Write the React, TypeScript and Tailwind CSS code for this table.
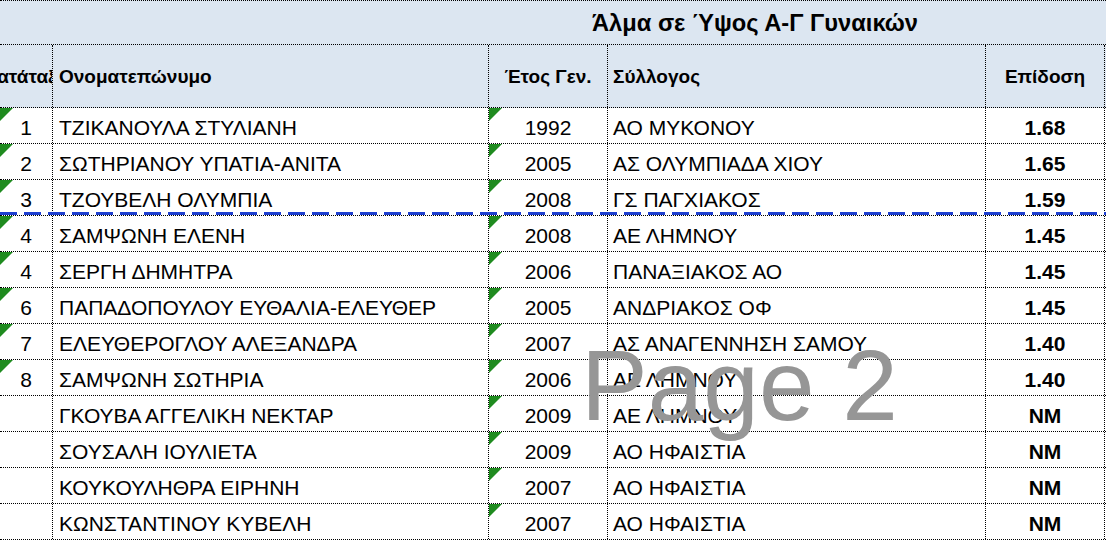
import React from "react";

type Row = { rank: string; name: string; year: string; club: string; mark: string };

const rows: Row[] = [
  { rank: "1", name: "ΤΖΙΚΑΝΟΥΛΑ ΣΤΥΛΙΑΝΗ", year: "1992", club: "ΑΟ ΜΥΚΟΝΟΥ", mark: "1.68" },
  { rank: "2", name: "ΣΩΤΗΡΙΑΝΟΥ ΥΠΑΤΙΑ-ΑΝΙΤΑ", year: "2005", club: "ΑΣ ΟΛΥΜΠΙΑΔΑ ΧΙΟΥ", mark: "1.65" },
  { rank: "3", name: "ΤΖΟΥΒΕΛΗ ΟΛΥΜΠΙΑ", year: "2008", club: "ΓΣ ΠΑΓΧΙΑΚΟΣ", mark: "1.59" },
  { rank: "4", name: "ΣΑΜΨΩΝΗ ΕΛΕΝΗ", year: "2008", club: "ΑΕ ΛΗΜΝΟΥ", mark: "1.45" },
  { rank: "4", name: "ΣΕΡΓΗ ΔΗΜΗΤΡΑ", year: "2006", club: "ΠΑΝΑΞΙΑΚΟΣ ΑΟ", mark: "1.45" },
  { rank: "6", name: "ΠΑΠΑΔΟΠΟΥΛΟΥ ΕΥΘΑΛΙΑ-ΕΛΕΥΘΕΡ", year: "2005", club: "ΑΝΔΡΙΑΚΟΣ ΟΦ", mark: "1.45" },
  { rank: "7", name: "ΕΛΕΥΘΕΡΟΓΛΟΥ ΑΛΕΞΑΝΔΡΑ", year: "2007", club: "ΑΣ ΑΝΑΓΕΝΝΗΣΗ ΣΑΜΟΥ", mark: "1.40" },
  { rank: "8", name: "ΣΑΜΨΩΝΗ ΣΩΤΗΡΙΑ", year: "2006", club: "ΑΕ ΛΗΜΝΟΥ", mark: "1.40" },
  { rank: "", name: "ΓΚΟΥΒΑ ΑΓΓΕΛΙΚΗ ΝΕΚΤΑΡ", year: "2009", club: "ΑΕ ΛΗΜΝΟΥ", mark: "NM" },
  { rank: "", name: "ΣΟΥΣΑΛΗ ΙΟΥΛΙΕΤΑ", year: "2009", club: "ΑΟ ΗΦΑΙΣΤΙΑ", mark: "NM" },
  { rank: "", name: "ΚΟΥΚΟΥΛΗΘΡΑ ΕΙΡΗΝΗ", year: "2007", club: "ΑΟ ΗΦΑΙΣΤΙΑ", mark: "NM" },
  { rank: "", name: "ΚΩΝΣΤΑΝΤΙΝΟΥ ΚΥΒΕΛΗ", year: "2007", club: "ΑΟ ΗΦΑΙΣΤΙΑ", mark: "NM" },
];

const cols = "grid grid-cols-[53px_436px_119px_378px_119px_1fr]";
const line = "border-dotted border-black";

// little green "number stored as text" flag
function Flag() {
  return (
    <span className="absolute left-0 top-0 w-0 h-0 border-t-[13px] border-t-[#1f8b1f] border-r-[13px] border-r-transparent" />
  );
}

export default function App() {
  return (
    <div className="relative w-[1106px] h-[542px] overflow-hidden bg-white text-black font-['Liberation_Sans_Narrow','Arial_Narrow','Liberation_Sans',sans-serif]">
      {/* title */}
      <div className={`h-[45px] flex items-center pl-[592px] pt-[2px] bg-[#dce6f1] border-t border-b ${line}`}>
        <span className="font-bold text-[23.7px] leading-none whitespace-nowrap">Άλμα σε Ύψος Α-Γ Γυναικών</span>
      </div>

      {/* column headers */}
      <div className={`${cols} h-[63px] bg-[#dce6f1] border-b ${line} font-bold text-[19px] leading-none`}>
        <div className={`flex items-center justify-center overflow-hidden whitespace-nowrap border-r ${line}`}>Κατάταξη</div>
        <div className={`flex items-center pl-[6px] border-r ${line}`}>Ονοματεπώνυμο</div>
        <div className={`flex items-center justify-center border-r ${line}`}>Έτος Γεν.</div>
        <div className={`flex items-center pl-[5px] border-r ${line}`}>Σύλλογος</div>
        <div className={`flex items-center justify-center border-r ${line}`}>Επίδοση</div>
        <div />
      </div>

      {rows.map((r, i) => (
        <div key={i} className={`${cols} h-[36px] border-b ${line} text-[21px] leading-none`}>
          <div className={`relative flex items-end justify-center pb-[5px] border-r ${line}`}>
            {r.rank && <Flag />}
            {r.rank}
          </div>
          <div className={`flex items-end pl-[6px] pb-[5px] whitespace-nowrap border-r ${line}`}>{r.name}</div>
          <div className={`relative flex items-end justify-center pb-[5px] border-r ${line}`}>
            <Flag />
            {r.year}
          </div>
          <div className={`flex items-end pl-[5px] pb-[5px] whitespace-nowrap border-r ${line}`}>{r.club}</div>
          <div className={`flex items-end justify-center pb-[5px] font-bold border-r ${line}`}>{r.mark}</div>
          <div />
        </div>
      ))}

      {/* page break marker */}
      <div className="absolute left-0 right-0 top-[212px] h-[3px] bg-[repeating-linear-gradient(to_right,#1d3fd0_0_17px,transparent_17px_24px)]" />

      {/* page watermark */}
      <div className="absolute left-[581px] top-[335px] text-[100px] leading-none text-[#969696] font-['Liberation_Sans',sans-serif] whitespace-nowrap pointer-events-none">
        Page 2
      </div>
    </div>
  );
}
